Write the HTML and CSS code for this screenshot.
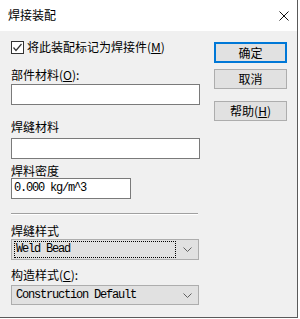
FILE: index.html
```html
<!DOCTYPE html>
<html lang="zh-CN">
<head>
  <meta charset="UTF-8">
  <title>焊接装配</title>
  <link rel="stylesheet" href="styles.css">
</head>
<body>

<div class="window">
  <div class="titlebar">
    <span class="title">焊接装配</span>
    <svg class="close" width="10" height="10" viewBox="0 0 10 10">
      <path d="M0.5 0.5 L9.5 9.5 M9.5 0.5 L0.5 9.5" stroke="#111" stroke-width="1" fill="none"/>
    </svg>
  </div>

  <div class="content">
    <div class="form">
      <label class="check-row">
        <span class="checkbox">
          <svg width="11" height="11" viewBox="0 0 11 11">
            <path d="M1.5 5.5 L4 8.5 L9.5 2" stroke="#333" stroke-width="1.2" fill="none"/>
          </svg>
        </span>
        <span>将此装配标记为焊接件(<u>M</u>)</span>
      </label>

      <div class="label lbl-part">部件材料(<u>O</u>):</div>
      <div class="input wide"></div>

      <div class="label lbl-weld">焊缝材料</div>
      <div class="input wide"></div>

      <div class="label lbl-density">焊料密度</div>
      <div class="input narrow mono">0.000 kg/m^3</div>

      <div class="separator"></div>

      <div class="label lbl-style">焊缝样式</div>
      <div class="combo">
        <span class="combo-text focused mono">Weld Bead</span>
        <svg class="chevron" width="9" height="5" viewBox="0 0 9 5">
          <path d="M0.5 0.5 L4.5 4.5 L8.5 0.5" stroke="#606060" stroke-width="1" fill="none"/>
        </svg>
      </div>

      <div class="label lbl-construct">构造样式(<u>C</u>):</div>
      <div class="combo short">
        <span class="combo-text mono">Construction Default</span>
        <svg class="chevron" width="9" height="5" viewBox="0 0 9 5">
          <path d="M0.5 0.5 L4.5 4.5 L8.5 0.5" stroke="#606060" stroke-width="1" fill="none"/>
        </svg>
      </div>
    </div>

    <div class="buttons">
      <button class="btn default">确定</button>
      <button class="btn">取消</button>
      <button class="btn help">帮助(<u>H</u>)</button>
    </div>
  </div>
</div>

</body>
</html>
```

FILE: styles.css
```css
body {
  margin: 0;
  background-color: #ffffff;
  font-family: "Noto Sans CJK SC", "Liberation Sans", sans-serif;
  font-size: 12px;
  color: #000;
}

/* Window */
.window {
  width: 298px;
  height: 318px;
  box-sizing: border-box;
  background-color: #f0f0f0;
  border-right: 1px solid #5a5a5a;
  border-bottom: 1px solid #5a5a5a;
}

.titlebar {
  height: 31px;
  background-color: #ffffff;
  display: flex;
  align-items: center;
  justify-content: space-between;
  padding: 0 8px 0 8px;
}
.title {
  line-height: 14px;
  margin-top: -1px;
}
.close {
  display: block;
}

/* Content */
.content {
  display: flex;
  padding: 9px 10px 0 11px;
}

.form {
  width: 189px;
  display: flex;
  flex-direction: column;
  align-items: flex-start;
}

.check-row {
  display: flex;
  align-items: center;
  height: 14px;
  line-height: 14px;
  gap: 3px;
}
.checkbox {
  width: 11px;
  height: 11px;
  border: 1px solid #333;
  background-color: #fff;
  display: flex;
  align-items: center;
  justify-content: center;
}
.checkbox svg {
  display: block;
}

.label {
  line-height: 14px;
  height: 14px;
}
.lbl-part { margin: 14px 0 2px 0; }
.lbl-weld { margin: 15px 0 4px 0; }
.lbl-density { margin: 5px 0 0 0; }
.lbl-style { margin: 9px 0 1px 0; }
.lbl-construct { margin: 8px 0 3px 0; }

.input {
  height: 21px;
  box-sizing: border-box;
  border: 1px solid #7a7a7a;
  background-color: #fff;
}
.wide { width: 189px; }
.narrow {
  width: 120px;
  padding-left: 2px;
  line-height: 19px;
}

.mono {
  font-family: "Liberation Mono", monospace;
  font-size: 12px;
  letter-spacing: -1.2px;
}

.separator {
  width: 187px;
  margin-top: 14px;
  border-top: 1px solid #a0a0a0;
  border-bottom: 1px solid #ffffff;
}

/* Combo */
.combo {
  width: 188px;
  height: 21px;
  box-sizing: border-box;
  border: 1px solid #adadad;
  background-color: #e1e1e1;
  display: flex;
  align-items: center;
  padding: 0 6px 0 2px;
}
.combo.short {
  height: 20px;
}
.combo-text {
  flex: 1;
  height: 15px;
  line-height: 15px;
  padding-left: 1px;
  border: 1px solid transparent;
  margin-right: 7px;
}
.combo-text.focused {
  border: 1px dotted #000;
}
.chevron {
  display: block;
}

/* Buttons */
.buttons {
  margin-left: auto;
  display: flex;
  flex-direction: column;
  width: 73px;
  padding-top: 2px;
}
.btn {
  height: 20px;
  padding: 0;
  font-family: "Noto Sans CJK SC", "Liberation Sans", sans-serif;
  font-size: 12px;
  line-height: 16px;
  background-color: #e1e1e1;
  border: 1px solid #adadad;
  color: #000;
  margin-bottom: 6px;
}
.btn.default {
  height: 21px;
  border: 2px solid #0078d7;
}
.btn.help {
  margin-top: 6px;
}
```
